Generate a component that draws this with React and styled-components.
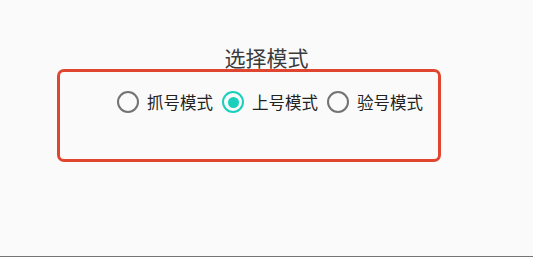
import React, { useState } from "react";
import styled, { createGlobalStyle } from "styled-components";

const GlobalStyle = createGlobalStyle`
  html, body {
    margin: 0;
    padding: 0;
    background: #fafafa;
  }
  * {
    box-sizing: border-box;
  }
`;

const modes = ["抓号模式", "上号模式", "验号模式"];

const App = () => {
  const [mode, setMode] = useState(1);

  return (
    <Page>
      <GlobalStyle />
      <Title>选择模式</Title>
      <Panel>
        <RadioRow>
          {modes.map((label, i) => (
            <Option key={label} onClick={() => setMode(i)}>
              <Circle $checked={mode === i} />
              <Label>{label}</Label>
            </Option>
          ))}
        </RadioRow>
      </Panel>
    </Page>
  );
};

export default App;

const Page = styled.div`
  height: 257px;
  padding-top: 45px;
  border-bottom: 1px solid #757575;
  font-family: "Noto Sans CJK SC", "Noto Sans", sans-serif;
`;

const Title = styled.div`
  text-align: center;
  font-size: 21px;
  line-height: 24px;
  color: #3a3a3a;
`;

const Panel = styled.div`
  margin: 0 0 0 57px;
  width: 384px;
  height: 93px;
  border: 3px solid #e0452f;
  border-radius: 7px;
  padding: 19px 0 0 57px;
`;

const RadioRow = styled.div`
  display: flex;
  align-items: center;
  gap: 9px;
`;

const Option = styled.div`
  display: flex;
  align-items: center;
  gap: 8px;
  cursor: pointer;
`;

const Circle = styled.span`
  width: 22px;
  height: 22px;
  border-radius: 50%;
  border: 2px solid ${(p) => (p.$checked ? "#1bcfbd" : "#737373")};
  display: flex;
  align-items: center;
  justify-content: center;
  &::after {
    content: "";
    width: 11px;
    height: 11px;
    border-radius: 50%;
    background: #1bcfbd;
    display: ${(p) => (p.$checked ? "block" : "none")};
  }
`;

const Label = styled.span`
  font-size: 16.5px;
  line-height: 22px;
  color: #222;
`;
